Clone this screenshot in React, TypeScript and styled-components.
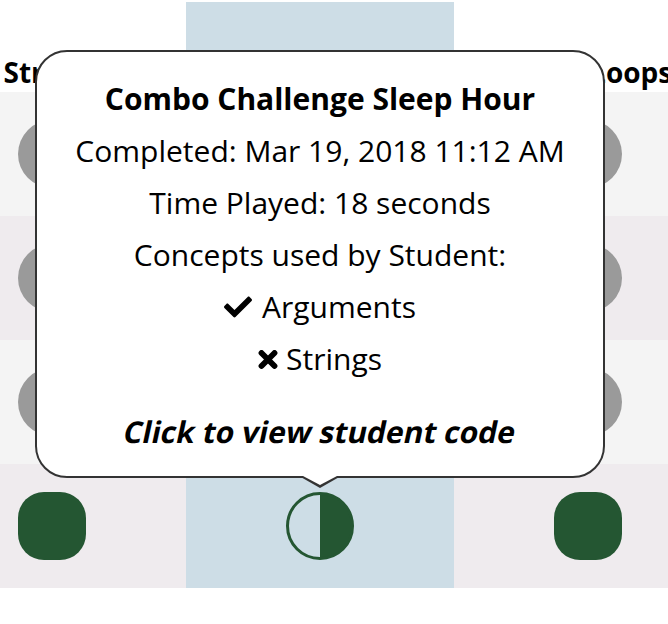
import React from 'react'
import styled, { createGlobalStyle } from 'styled-components'
import { FaCheck } from 'react-icons/fa'

const GlobalStyle = createGlobalStyle`
	html, body {
		margin: 0;
		padding: 0;
		background: #fff;
	}
	body {
		font-family: 'Open Sans', 'DejaVu Sans', sans-serif;
		color: #000;
	}
`

type Status = 'none' | 'partial' | 'perfect'

const columns = [
	{ title: 'Strings', active: false },
	{ title: '', active: true },
	{ title: 'While Loops', active: false },
]

const rows: Status[][] = [
	['none', 'none', 'none'],
	['none', 'none', 'none'],
	['none', 'none', 'none'],
	['perfect', 'partial', 'perfect'],
]

const concepts = [
	{ name: 'Arguments', used: true },
	{ name: 'Strings', used: false },
]

const HIGHLIGHT = '#cddde6'
const GREEN = '#245632'

const Cross = () => (
	<svg width="20" height="19" viewBox="0 0 20 19" aria-hidden="true">
		<path d="M3.5 3 L16.5 16 M16.5 3 L3.5 16" stroke="currentColor" strokeWidth={5.8} strokeLinecap="round" fill="none" />
	</svg>
)

export default function App() {
	return (
		<>
			<GlobalStyle />
			<Page>
				<Viewport>
					<Grid>
						{columns.map((col, i) => (
							<HeaderCell key={i} $active={col.active}>
								{col.title}
							</HeaderCell>
						))}
						{rows.map((row, r) =>
							row.map((status, c) => (
								<Cell key={`${r}-${c}`} $active={columns[c].active} $even={r % 2 === 1}>
									{status === 'none' && <Dot />}
									{status === 'perfect' && <Perfect />}
									{status === 'partial' && <Partial />}
								</Cell>
							))
						)}
					</Grid>
				</Viewport>
				<Tooltip>
					<TipTitle>Combo Challenge Sleep Hour</TipTitle>
					<TipLine>Completed: Mar 19, 2018 11:12 AM</TipLine>
					<TipLine>Time Played: 18 seconds</TipLine>
					<TipLine>Concepts used by Student:</TipLine>
					{concepts.map((c) => (
						<Concept key={c.name} $used={c.used}>
							{c.used ? <FaCheck size={28} /> : <Cross />}
							<span>{c.name}</span>
						</Concept>
					))}
					<TipLink>
						<Slanted>Click to view student code</Slanted>
					</TipLink>
				</Tooltip>
			</Page>
		</>
	)
}

const Page = styled.div`
	position: relative;
	width: 668px;
	height: 624px;
	padding-top: 2px;
	box-sizing: border-box;
	overflow: hidden;
`

const Viewport = styled.div`
	overflow: hidden;
	width: 100%;
`

const Grid = styled.div`
	display: grid;
	grid-template-columns: repeat(3, 268px);
	grid-template-rows: 90px;
	grid-auto-rows: 124px;
	margin-left: -82px;
`

const HeaderCell = styled.div<{ $active: boolean }>`
	display: flex;
	align-items: flex-end;
	justify-content: center;
	padding-bottom: 1px;
	background: ${(p) => (p.$active ? HIGHLIGHT : '#fff')};
	font-size: 28px;
	font-weight: 700;
	line-height: 38px;
	white-space: nowrap;
`

const Cell = styled.div<{ $active: boolean; $even: boolean }>`
	display: flex;
	align-items: center;
	justify-content: center;
	background: ${(p) => (p.$active ? HIGHLIGHT : p.$even ? '#efebee' : '#f4f4f4')};
`

const Dot = styled.span`
	width: 68px;
	height: 68px;
	border-radius: 50%;
	background: #9a9a9a;
`

const Perfect = styled.span`
	width: 68px;
	height: 68px;
	border-radius: 26px;
	background: ${GREEN};
`

const Partial = styled.span`
	width: 68px;
	height: 68px;
	box-sizing: border-box;
	border-radius: 50%;
	border: 3px solid ${GREEN};
	background: linear-gradient(to right, transparent 50%, ${GREEN} 50%);
`

const Tooltip = styled.div`
	position: absolute;
	left: 35px;
	top: 50px;
	width: 570px;
	height: 428px;
	box-sizing: border-box;
	padding-top: 21px;
	background: #fff;
	border: 2px solid #333;
	border-radius: 32px;
	text-align: center;
	font-size: 30px;
	z-index: 2;
	&::before,
	&::after {
		content: '';
		position: absolute;
		left: 50%;
		top: 100%;
		width: 0;
		height: 0;
		border-style: solid;
		border-color: transparent;
	}
	&::before {
		transform: translateX(-21px);
		border-width: 12px 21px 0 21px;
		border-top-color: #333;
	}
	&::after {
		transform: translateX(-17px);
		border-width: 9px 17px 0 17px;
		border-top-color: #fff;
	}
`

const TipLine = styled.div`
	line-height: 52px;
	white-space: nowrap;
`

const TipTitle = styled(TipLine)`
	font-weight: 700;
`

const TipLink = styled(TipLine)`
	margin-top: 21px;
	font-weight: 700;
	cursor: pointer;
`

const Slanted = styled.span`
	display: inline-block;
	transform: skewX(-12deg);
`

const Concept = styled(TipLine)<{ $used: boolean }>`
	display: flex;
	align-items: center;
	justify-content: center;
	gap: ${(p) => (p.$used ? '10px' : '8px')};
	height: 52px;
`
